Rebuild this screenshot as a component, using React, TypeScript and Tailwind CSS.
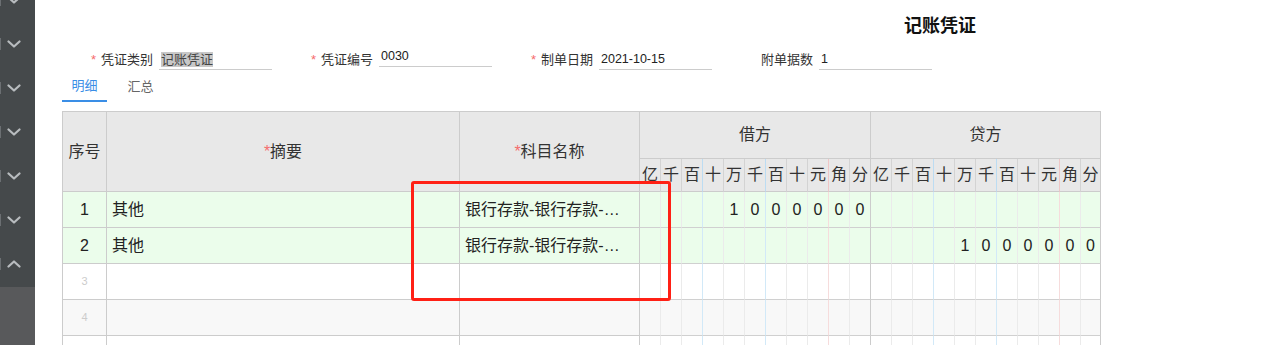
import React from 'react';

const digitLabels = ['亿', '千', '百', '十', '万', '千', '百', '十', '元', '角', '分'];

const rows = [
  { no: '1', summary: '其他', subject: '银行存款-银行存款-…', debit: '1000000', credit: '' },
  { no: '2', summary: '其他', subject: '银行存款-银行存款-…', debit: '', credit: '1000000' },
  { no: '3', summary: '', subject: '', debit: '', credit: '' },
  { no: '4', summary: '', subject: '', debit: '', credit: '' },
  { no: '', summary: '', subject: '', debit: '', credit: '' },
];

// split an amount into the 11 digit cells, right aligned
const toCells = (v: string) => v.padStart(11, ' ').split('').map((c) => (c === ' ' ? '' : c));

const headLine = (j: number) => {
  if (j === 2 || j === 5) return 'border-r-[#bcdcf2]';
  if (j === 8) return 'border-r-[#efc6c6]';
  if (j === 10) return 'border-r-[#cccccc]';
  return 'border-r-[#d3d3d3]';
};

const bodyLine = (j: number) => {
  if (j === 2 || j === 5) return 'border-r-[#d2e9f8]';
  if (j === 8) return 'border-r-[#f6dcdc]';
  if (j === 10) return 'border-r-[#cccccc]';
  return 'border-r-[#ebebeb]';
};

const rowBg = (i: number) => {
  if (i < 2) return 'bg-[#ebfdeb]';
  if (i === 3) return 'bg-[#f8f8f8]';
  return 'bg-white';
};

function Chevron({ up }: { up?: boolean }) {
  return (
    <svg width="14" height="8" viewBox="0 0 14 8" className="ml-[6px]">
      <polyline
        points={up ? '1.5,6.5 7,1.5 12.5,6.5' : '1.5,1.5 7,6.5 12.5,1.5'}
        fill="none"
        stroke="#b8bcbf"
        strokeWidth="2.2"
        strokeLinecap="round"
        strokeLinejoin="round"
      />
    </svg>
  );
}

function Field({ label, value, required, selected, raise }: { label: string; value: string; required?: boolean; selected?: boolean; raise?: boolean }) {
  return (
    <div className="w-[220px] flex items-center">
      <div className="w-[94px] flex justify-end items-center pr-[6px] text-[13px] text-[#333]">
        {required && <span className="text-[#f56c6c] mr-[5px]">*</span>}
        <span>{label}</span>
      </div>
      <div className={`w-[113px] h-[20px] border-b border-[#cccccc] flex items-center pl-[2px] pb-[1px] ${raise ? 'mb-[6px]' : ''}`}>
        {selected ? (
          <span className="bg-[#c8c8c8] text-[#444] text-[13px] leading-[15px]">{value}</span>
        ) : (
          <span className="text-[#222] text-[12.5px]">{value}</span>
        )}
      </div>
    </div>
  );
}

export default function App() {
  return (
    <div className="flex h-[345px] w-[1272px] overflow-hidden bg-white font-['Liberation_Sans','Noto_Sans_CJK_SC',sans-serif]">
      {/* left rail */}
      <div className="w-[35px] shrink-0 flex flex-col">
        <div className="h-[287px] bg-[#45494b] overflow-hidden">
          <div className="-mt-[22px]">
            {[0, 1, 2, 3, 4, 5, 6].map((i) => (
              <div key={i} className="h-[44px] flex items-center">
                <div className="w-[1px] h-[12px] bg-[#6b6f72]" />
                <Chevron up={i === 6} />
              </div>
            ))}
          </div>
        </div>
        <div className="flex-1 bg-[#58595b]" />
      </div>

      {/* main */}
      <div className="relative flex-1 flex flex-col">
        <div className="mt-[2px] h-[2px] bg-[#e2e2e2] shadow-[0_1px_1px_rgba(0,0,0,0.05)]" />

        <div className="mt-[12px] h-[24px] leading-[24px] pl-[869px] text-[18px] font-bold text-[#111]">记账凭证</div>

        <div className="mt-[12px] h-[20px] pl-[30px] flex">
          <Field label="凭证类别" value="记账凭证" required selected />
          <Field label="凭证编号" value="0030" required raise />
          <Field label="制单日期" value="2021-10-15" required />
          <Field label="附单据数" value="1" />
        </div>

        <div className="mt-[2px] pl-[27px] flex text-[13px]">
          <div className="w-[45px] h-[30px] border-b-2 border-[#3a8ee6] text-[#3a8ee6] flex items-center justify-center">明细</div>
          <div className="ml-[11px] w-[45px] h-[30px] text-[#666] flex items-center justify-center">汇总</div>
        </div>

        <div className="mt-[9px] pl-[27px]">
          <div className="grid w-max grid-cols-[44px_353px_180px_repeat(21,21px)_20px] grid-rows-[47px_33px_repeat(5,36px)] border-l border-t border-[#cccccc] text-[16px]">
            <div className="row-span-2 bg-[#e8e8e8] border-r border-b border-[#cccccc] flex items-center justify-center text-[#333]">序号</div>
            <div className="row-span-2 bg-[#e8e8e8] border-r border-b border-[#cccccc] flex items-center justify-center text-[#333]">
              <span className="text-[#f56c6c]">*</span>摘要
            </div>
            <div className="row-span-2 bg-[#e8e8e8] border-r border-b border-[#cccccc] flex items-center justify-center text-[#333]">
              <span className="text-[#f56c6c]">*</span>科目名称
            </div>
            <div className="col-span-11 bg-[#e8e8e8] border-r border-b border-[#cccccc] flex items-center justify-center text-[#333]">借方</div>
            <div className="col-span-11 bg-[#e8e8e8] border-r border-b border-[#cccccc] flex items-center justify-center text-[#333]">贷方</div>

            {[...digitLabels, ...digitLabels].map((d, k) => (
              <div key={k} className={`bg-[#e8e8e8] border-r border-b border-b-[#cccccc] ${headLine(k % 11)} flex items-center justify-center text-[#333]`}>
                {d}
              </div>
            ))}

            {rows.map((r, i) => (
              <React.Fragment key={i}>
                <div className={`${rowBg(i)} border-r border-b border-[#cccccc] flex items-center justify-center ${r.summary ? 'text-[#222]' : 'text-[11px] text-[#cccccc]'}`}>
                  {r.no}
                </div>
                <div className={`${rowBg(i)} border-r border-b border-[#cccccc] flex items-center pl-[5px] text-[#222]`}>{r.summary}</div>
                <div className={`${rowBg(i)} border-r border-b border-[#cccccc] flex items-center pl-[5px] text-[#222] whitespace-nowrap`}>{r.subject}</div>
                {[...toCells(r.debit), ...toCells(r.credit)].map((c, k) => (
                  <div key={k} className={`${rowBg(i)} border-r border-b border-b-[#d0d0d0] ${bodyLine(k % 11)} flex items-center justify-center text-[#222]`}>
                    {c}
                  </div>
                ))}
              </React.Fragment>
            ))}
          </div>
        </div>

        {/* annotation box drawn over the table */}
        <div className="absolute left-[376px] top-[181px] w-[260px] h-[120px] border-[3px] border-[#ff2015] rounded-[3px] pointer-events-none" />
      </div>
    </div>
  );
}
